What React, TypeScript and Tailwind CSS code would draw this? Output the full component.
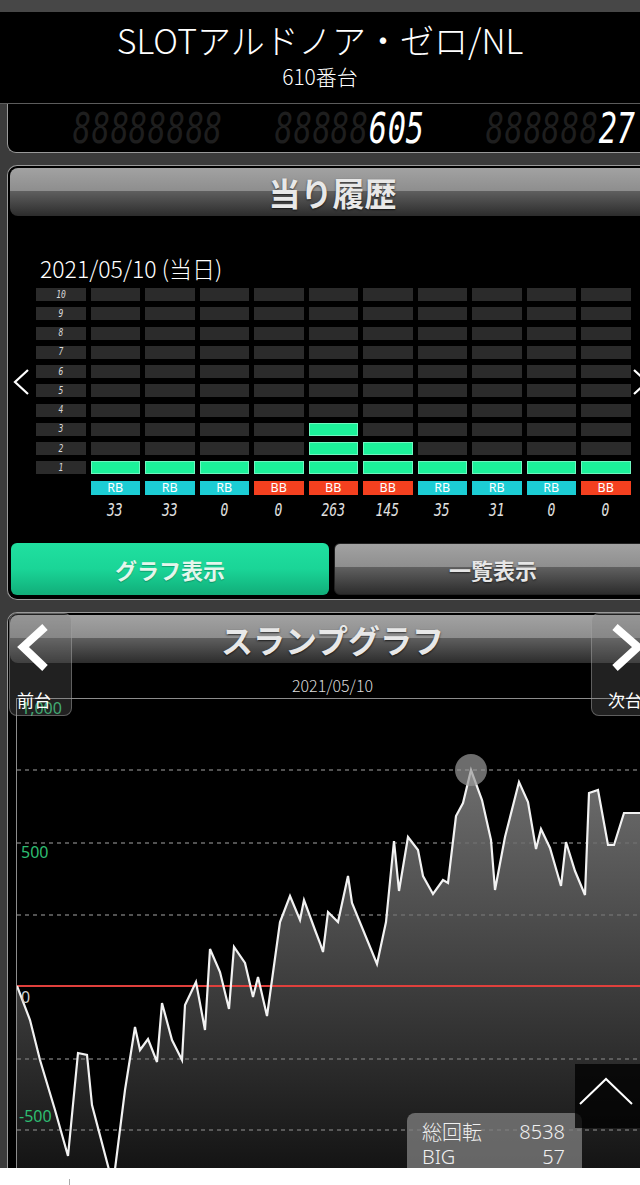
import React from "react";

const JP = "font-['Noto_Sans_CJK_JP','Noto_Sans',sans-serif]";

function LedGroup({ value, className }: { value: string; className?: string }) {
  const chars = value.padStart(8, " ").split("");
  return (
    <div className={`flex ${className ?? ""}`}>
      {chars.map((c, i) => (
        <span
          key={i}
          className={`inline-block w-[18.75px] text-center font-['DejaVu_Sans_Mono',monospace] italic text-[42px] leading-[31px] scale-x-[0.72] ${
            c === " " ? "text-[#1e1e1e]" : "text-white"
          }`}
        >
          {c === " " ? "8" : c}
        </span>
      ))}
    </div>
  );
}

const cols = [
  { n: 1, t: "RB", v: "33" },
  { n: 1, t: "RB", v: "33" },
  { n: 1, t: "RB", v: "0" },
  { n: 1, t: "BB", v: "0" },
  { n: 3, t: "BB", v: "263" },
  { n: 2, t: "BB", v: "145" },
  { n: 1, t: "RB", v: "35" },
  { n: 1, t: "RB", v: "31" },
  { n: 1, t: "RB", v: "0" },
  { n: 1, t: "BB", v: "0" },
];
const rows = [10, 9, 8, 7, 6, 5, 4, 3, 2, 1];

const pts: [number, number][] = [
  [17, 986], [30, 1020], [40, 1060], [55, 1110], [68, 1156], [78, 1053], [87, 1055], [92, 1105],
  [113, 1185], [125, 1090], [135, 1027], [140, 1050], [148, 1039], [157, 1062], [162, 1003],
  [172, 1040], [182, 1060], [185, 1005], [196, 982], [205, 1030], [210, 949], [220, 972],
  [229, 1009], [234, 947], [245, 963], [253, 997], [258, 977], [267, 1016], [280, 922],
  [290, 896], [300, 920], [304, 900], [315, 930], [320, 943], [323, 952], [328, 912],
  [338, 922], [348, 876], [352, 903], [377, 964], [386, 922], [394, 841], [399, 891],
  [408, 837], [418, 850], [423, 876], [433, 894], [443, 880], [448, 883], [456, 816],
  [463, 803], [471, 770], [482, 800], [491, 840], [495, 890], [505, 837], [519, 782],
  [528, 802], [536, 849], [541, 829], [550, 848], [561, 886], [566, 842], [575, 871],
  [585, 895], [589, 793], [598, 790], [608, 845], [614, 845], [624, 813], [640, 813],
];

const GLOSS =
  "bg-[linear-gradient(to_bottom,#a2a2a2_0%,#8e8e8e_47%,#606060_47%,#2c2c2c_100%)]";

export default function App() {
  const line = pts.map((p) => p.join(",")).join(" ");
  const area = line + " 640,1200 17,1200";
  return (
    <div className={`relative w-[640px] h-[1185px] overflow-hidden bg-[#3b3b3b] ${JP}`}>
      <div className="h-[1168px] overflow-hidden flex flex-col">
        <div className="h-[12px] bg-[#474747] shrink-0" />
        <div className="h-[91px] bg-black flex flex-col items-center text-white shrink-0">
          <div className="mt-[8px] text-[34px] leading-[40px] font-light">SLOTアルドノア・ゼロ/NL</div>
          <div className="mt-[4px] text-[21px] leading-[24px] font-light">610番台</div>
        </div>
        <div className="h-[1px] bg-[#5c5c5c] shrink-0" />
        {/* LED panel */}
        <div className="ml-[7px] w-[648px] h-[49px] shrink-0 bg-black border-l border-b border-[#9a9a9a] rounded-bl-[9px] flex pt-[9px] overflow-hidden">
          <LedGroup value="" className="ml-[62px]" />
          <LedGroup value="605" className="ml-[52px]" />
          <LedGroup value="27" className="ml-[61px]" />
        </div>

        {/* 当り履歴 panel */}
        <div className="relative mt-[12px] ml-[7px] w-[648px] h-[435px] shrink-0 bg-black border border-r-0 border-[#9a9a9a] rounded-l-[10px] pt-[2px] pl-[2px]">
          <div className={`h-[48px] rounded-l-[8px] ${GLOSS} flex items-center justify-center`}>
            <span className="text-[32px] font-bold text-[#e8e8e8] [text-shadow:0_1px_2px_rgba(0,0,0,0.7)] leading-none">
              当り履歴
            </span>
          </div>
          <div className="mt-[38px] pl-[30px] text-white text-[23px] leading-[28px] font-light">2021/05/10 (当日)</div>
          <div className="mt-[6px] pl-[26px] flex flex-col gap-[6.25px]">
            {rows.map((r) => (
              <div key={r} className="flex gap-[5px] h-[13px]">
                <div className="w-[49.5px] bg-[#2b2b2b] flex items-center justify-center">
                  <span className="font-['DejaVu_Sans_Mono',monospace] italic text-[10px] leading-none text-[#d8d8d8] scale-x-[0.8] inline-block">
                    {r}
                  </span>
                </div>
                {cols.map((c, i) => (
                  <div
                    key={i}
                    className={`w-[49.5px] ${
                      r <= c.n ? "bg-[#1cf29a] border border-[#6ef7c0]" : "bg-[#2b2b2b]"
                    }`}
                  />
                ))}
              </div>
            ))}
            <div className="flex gap-[5px] h-[14px] mt-[0.75px]">
              <div className="w-[49.5px]" />
              {cols.map((c, i) => (
                <div
                  key={i}
                  className={`w-[49.5px] flex items-center justify-center text-white text-[12.5px] leading-none font-['Noto_Sans',sans-serif] ${
                    c.t === "RB" ? "bg-[#1ccdd4]" : "bg-[#f4401f]"
                  }`}
                >
                  {c.t}
                </div>
              ))}
            </div>
          </div>
          <div className="mt-[4px] pl-[26px] flex gap-[5px] h-[22px]">
            <div className="w-[49.5px]" />
            {cols.map((c, i) => (
              <div key={i} className="w-[49.5px] flex items-center justify-center">
                <span className="inline-block font-['DejaVu_Sans_Mono',monospace] italic text-[18px] leading-none text-[#e2e2e2] scale-x-[0.72]">
                  {c.v}
                </span>
              </div>
            ))}
          </div>
          <div className="mt-[22px] ml-[1px] flex gap-[5px]">
            <div className="w-[318px] h-[52px] rounded-[6px] bg-[linear-gradient(to_bottom,#20e0a0_0%,#1ad597_50%,#11ad79_100%)] flex items-center justify-center">
              <span className="text-[22px] font-bold text-[#e4f6ec] [text-shadow:0_1px_1px_rgba(0,0,0,0.25)]">グラフ表示</span>
            </div>
            <div className={`w-[318px] h-[52px] rounded-[6px] ${GLOSS} border border-[#222] flex items-center justify-center`}>
              <span className="text-[22px] font-bold text-[#e6e6e6] [text-shadow:0_1px_2px_rgba(0,0,0,0.6)]">一覧表示</span>
            </div>
          </div>
          <svg className="absolute left-[5px] top-[203px]" width="17" height="26" viewBox="0 0 17 26">
            <polyline points="15,1 2,13 15,25" fill="none" stroke="#fff" strokeWidth="2.2" />
          </svg>
          <svg className="absolute left-[625px] top-[203px]" width="17" height="26" viewBox="0 0 17 26">
            <polyline points="1,1 14,13 1,25" fill="none" stroke="#fff" strokeWidth="2.2" />
          </svg>
        </div>

        {/* スランプグラフ panel */}
        <div className="relative mt-[12px] ml-[7px] w-[648px] h-[600px] shrink-0 bg-black border-l border-t border-[#9a9a9a] rounded-tl-[10px] pt-[2px] pl-[2px]">
          <div className={`h-[48px] rounded-l-[8px] ${GLOSS} flex items-center justify-center`}>
            <span className="text-[32px] font-bold text-[#e8e8e8] [text-shadow:0_1px_2px_rgba(0,0,0,0.7)] leading-none">
              スランプグラフ
            </span>
          </div>
          <div className="mt-[12px] text-center text-[16px] leading-[20px] text-[#dcdcdc] font-light">2021/05/10</div>
          <div className="mt-[3px] ml-[6px] w-[640px] h-[520px] border-l border-t border-[#8c8c8c]">
            <svg width="623" height="470" viewBox="17 699 623 470" className="block">
              <defs>
                <linearGradient id="fillg" gradientUnits="userSpaceOnUse" x1="0" y1="770" x2="0" y2="1168">
                  <stop offset="0" stopColor="#6e6e6e" />
                  <stop offset="1" stopColor="#141414" />
                </linearGradient>
              </defs>
              <polygon points={area} fill="url(#fillg)" />
              {[770, 843, 915, 1059, 1130].map((y) => (
                <line key={y} x1={17} x2={640} y1={y} y2={y} stroke="#6e6e6e" strokeWidth={1.5} strokeDasharray="4 4" />
              ))}
              <line x1={17} x2={640} y1={986} y2={986} stroke="#e0403c" strokeWidth={2} />
              <polyline points={line} fill="none" stroke="#f2f2f2" strokeWidth={2.2} strokeLinejoin="miter" />
              <circle cx={471} cy={770} r={16} fill="#9a9a9a" fillOpacity={0.7} />
              <g fontFamily="'Noto Sans', sans-serif" fontSize="16">
                <text x={21} y={714} fill="#2ebd72">1,000</text>
                <text x={21} y={858} fill="#2ebd72">500</text>
                <text x={21} y={1003} fill="#cfcfcf">0</text>
                <text x={19} y={1122} fill="#2ebd72">-500</text>
              </g>
            </svg>
          </div>

          {/* nav overlays */}
          <div className="absolute left-[1px] top-[0px] w-[63px] h-[103px] rounded-[8px] bg-[rgba(120,120,120,0.28)] border border-[rgba(170,170,170,0.45)]">
            <svg className="absolute left-[7px] top-[10px]" width="34" height="48" viewBox="0 0 34 48">
              <polyline points="28,3 6,23 28,44" fill="none" stroke="#fff" strokeWidth="8" strokeLinejoin="miter" />
            </svg>
            <span className="absolute left-[7px] top-[76px] text-[17px] leading-[20px] text-white">前台</span>
          </div>
          <div className="absolute left-[583px] top-[0px] w-[64px] h-[103px] rounded-[8px] bg-[rgba(120,120,120,0.28)] border border-[rgba(170,170,170,0.45)]">
            <svg className="absolute left-[17px] top-[10px]" width="36" height="48" viewBox="0 0 36 48">
              <polyline points="6,3 29,23 6,44" fill="none" stroke="#fff" strokeWidth="8" strokeLinejoin="miter" />
            </svg>
            <span className="absolute left-[16px] top-[76px] text-[17px] leading-[20px] text-white whitespace-nowrap">次台</span>
          </div>
        </div>
      </div>
      <div className="h-[17px] bg-white relative">
        <div className="absolute left-[69px] top-[11px] w-[1px] h-[6px] bg-[#aaa]" />
      </div>

      {/* stats overlay */}
      <div className="absolute left-[407px] top-[1113px] w-[175px] h-[55px] rounded-t-[8px] bg-[rgba(125,125,125,0.78)] pt-[6px] pl-[15px] pr-[17px] text-[#f0f0f0] text-[20px] leading-[25px] font-light">
        <div className="flex justify-between">
          <span>総回転</span>
          <span className="font-['Noto_Sans',sans-serif]">8538</span>
        </div>
        <div className="flex justify-between">
          <span className="font-['Noto_Sans',sans-serif]">BIG</span>
          <span className="font-['Noto_Sans',sans-serif]">57</span>
        </div>
      </div>

      {/* scroll top */}
      <div className="absolute left-[575px] top-[1064px] w-[65px] h-[64px] bg-[rgba(0,0,0,0.78)]">
        <svg width="65" height="64" viewBox="0 0 65 64">
          <polyline points="5,40 31,15 57,40" fill="none" stroke="#fff" strokeWidth="2" />
        </svg>
      </div>
    </div>
  );
}
